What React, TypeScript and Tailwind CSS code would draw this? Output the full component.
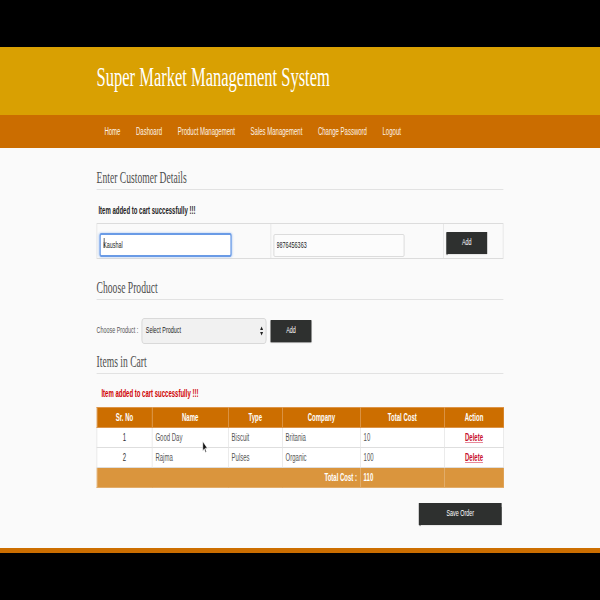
import { ReactNode } from "react"

const links = ["Home", "Dashoard", "Product Management", "Sales Management", "Change Password", "Logout"]

const items = [
  { no: 1, name: "Good Day", type: "Biscuit", company: "Britania", cost: "10" },
  { no: 2, name: "Rajma", type: "Pulses", company: "Organic", cost: "100" },
]

function SectionHeading({ children }: { children: ReactNode }) {
  return (
    <h2 className="border-b border-[#e2e2e2] pb-[1px] font-['Liberation_Serif',serif] text-[16px] leading-[20px] text-[#4f4f4f]">
      {children}
    </h2>
  )
}

function DarkButton({ label, className }: { label: string; className: string }) {
  return (
    <button className={"flex items-center justify-center bg-[#2e302f] text-[9px] text-white shadow-[0_1px_1px_#999] " + className}>
      {label}
    </button>
  )
}

export default function App() {
  return (
    <div className="h-[600px] w-[600px] overflow-hidden bg-black">
      {/* the capture is squeezed horizontally, so the page is laid out at 1000px and scaled */}
      <div className="w-[1000px] origin-top-left scale-x-[0.6] font-['Liberation_Sans',Arial,sans-serif]">
        <div className="h-[47px] bg-black" />

        <header className="h-[68px] bg-[#d9a002]">
          <div className="mx-auto w-[678px] pt-[16px]">
            <h1 className="font-['Liberation_Serif',serif] text-[27.5px] leading-[27px] text-white">
              Super Market Management System
            </h1>
          </div>
        </header>

        <nav className="h-[33px] bg-[#cb6d00]">
          <ul className="mx-auto flex h-full w-[678px] items-center">
            {links.map((l) => (
              <li key={l} className="px-[13px] text-[10px] text-[#fdf3e6]">
                {l}
              </li>
            ))}
          </ul>
        </nav>

        <main className="h-[400px] bg-[#fafafa] pt-[20px]">
          <div className="mx-auto w-[678px]">
            <SectionHeading>Enter Customer Details</SectionHeading>
            <p className="mt-[14px] pl-[3px] text-[10px] font-bold leading-[14px] text-[#222]">
              Item added to cart successfully !!!
            </p>

            <div className="mt-[5px] flex h-[36px] border border-[#dcdcdc]">
              <div className="w-[290px] border-r border-[#dcdcdc] px-[4px] pt-[7px]">
                <div className="relative">
                  <input
                    readOnly
                    defaultValue="Kaushal"
                    className="h-[24px] w-[220px] rounded-[3px] border-2 border-[#6a9be6] bg-white px-[4px] text-[9px] text-[#222] shadow-[0_0_3px_#9fc0f2] outline-none"
                  />
                  <span className="absolute left-[7px] top-[7px] h-[10px] w-[1px] bg-black" />
                </div>
              </div>
              <div className="w-[288px] border-r border-[#dcdcdc] px-[4px] pt-[7px]">
                <input
                  readOnly
                  defaultValue="9876456363"
                  className="h-[23px] w-[218px] rounded-[2px] border border-[#d4d4d4] bg-[#fcfcfc] px-[4px] text-[9px] text-[#222] outline-none"
                />
              </div>
              <div className="flex-1 px-[4px] pt-[8px]">
                <DarkButton label="Add" className="h-[22px] w-[68px]" />
              </div>
            </div>

            <div className="mt-[19px]">
              <SectionHeading>Choose Product</SectionHeading>
            </div>

            <div className="mt-[18px] flex h-[26px] items-center">
              <span className="w-[75px] text-[9px] text-[#555]">Choose Product :</span>
              <div className="flex h-[26px] w-[208px] items-center justify-between rounded-[4px] border border-[#d2d2d2] bg-[#f1f1f1] pl-[6px] pr-[4px]">
                <span className="text-[9px] text-[#222]">Select Product</span>
                <svg width="6" height="10" viewBox="0 0 6 10" className="text-[#222]">
                  <path d="M3 0.5 L5.5 4 L0.5 4 Z M3 9.5 L5.5 6 L0.5 6 Z" fill="currentColor" />
                </svg>
              </div>
              <DarkButton label="Add" className="ml-[7px] h-[22px] w-[68px]" />
            </div>

            <div className="mt-[8px]">
              <SectionHeading>Items in Cart</SectionHeading>
            </div>
            <p className="mt-[13px] pl-[8px] text-[10px] font-bold leading-[14px] text-[#d00000]">
              Item added to cart successfully !!!
            </p>

            <div className="relative mt-[6px]">
              <table className="w-full table-fixed border-collapse text-[10px]">
                <colgroup>
                  <col className="w-[92px]" />
                  <col className="w-[127px]" />
                  <col className="w-[90px]" />
                  <col className="w-[130px]" />
                  <col className="w-[140px]" />
                  <col className="w-[99px]" />
                </colgroup>
                <thead>
                  <tr className="h-[20px] bg-[#cc6e00] text-white">
                    {["Sr. No", "Name", "Type", "Company", "Total Cost", "Action"].map((h) => (
                      <th key={h} className="border border-[#dc9448] text-center font-bold">
                        {h}
                      </th>
                    ))}
                  </tr>
                </thead>
                <tbody>
                  {items.map((it) => (
                    <tr key={it.no} className="h-[20px] bg-white text-[#555]">
                      <td className="border border-[#dedede] text-center text-[#333]">{it.no}</td>
                      <td className="border border-[#dedede] px-[5px]">{it.name}</td>
                      <td className="border border-[#dedede] px-[5px]">{it.type}</td>
                      <td className="border border-[#dedede] px-[5px]">{it.company}</td>
                      <td className="border border-[#dedede] px-[5px]">{it.cost}</td>
                      <td className="border border-[#dedede] text-center">
                        <a className="font-bold text-[#c8102e] underline decoration-[#e88a9a]">Delete</a>
                      </td>
                    </tr>
                  ))}
                  <tr className="h-[20px] bg-[#da953d] font-bold text-white">
                    <td colSpan={4} className="border border-[#e2ac6a] px-[5px] text-right">
                      Total Cost :
                    </td>
                    <td className="border border-[#e2ac6a] px-[5px]">110</td>
                    <td className="border border-[#e2ac6a]" />
                  </tr>
                </tbody>
              </table>
              <svg width="10" height="12" viewBox="0 0 10 12" className="absolute left-[176px] top-[34px]">
                <path d="M1 0.5 L1 10 L3.5 7.8 L5.5 11.5 L7 10.8 L5 7.2 L8.5 7.2 Z" fill="#111" stroke="#fff" strokeWidth="0.6" />
              </svg>
            </div>

            <div className="mt-[15px] flex justify-end pr-[3px]">
              <DarkButton label="Save Order" className="h-[22px] w-[138px]" />
            </div>
          </div>
        </main>

        <div className="h-[5px] bg-[#cc6e00]" />
        <div className="h-[47px] bg-black" />
      </div>
    </div>
  )
}
